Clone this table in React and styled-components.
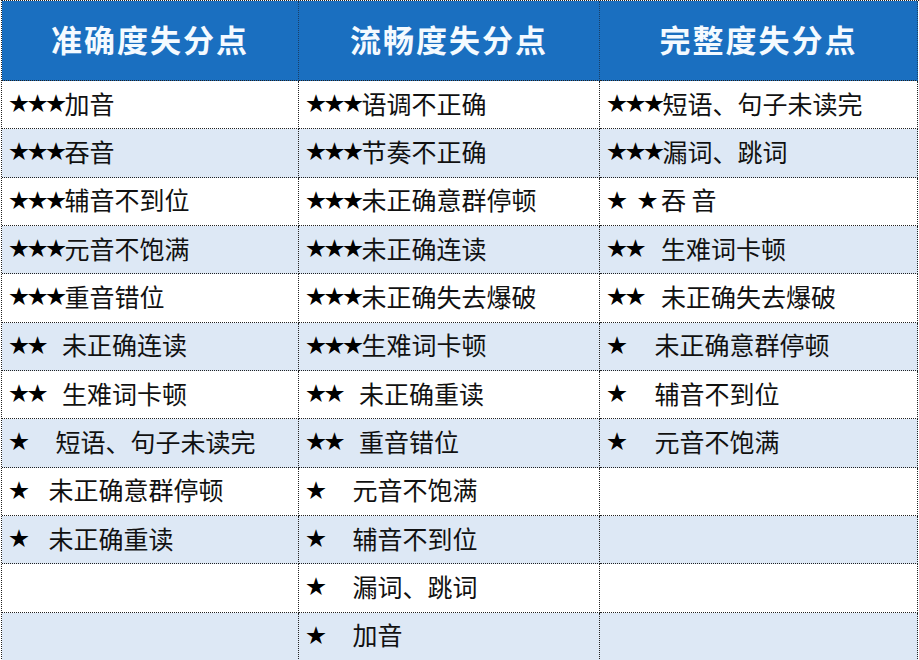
import React from "react";
import styled, { createGlobalStyle } from "styled-components";

const GlobalStyle = createGlobalStyle`
  html, body {
    margin: 0;
    padding: 0;
    background: #ffffff;
  }
  body {
    font-family: "Noto Sans CJK SC", "Noto Sans", sans-serif;
  }
`;

const Page = styled.div`
  width: 919px;
  height: 660px;
  padding-left: 1px;
  box-sizing: border-box;
  overflow: hidden;
`;

const Grid = styled.div`
  display: grid;
  grid-template-columns: 297px 301px 318px;
  grid-template-rows: 80px repeat(12, 1fr);
  height: 661px;
  border-top: 1px dotted #222;
  border-left: 1px dotted #222;
  box-sizing: border-box;
`;

const HeadCell = styled.div`
  background: #1a6fc0;
  color: #f4faff;
  font-weight: 700;
  font-size: 31px;
  letter-spacing: 2px;
  display: flex;
  align-items: center;
  justify-content: center;
  border-right: 1px dotted #1a3f66;
  border-bottom: 1px dotted #222;
  padding-bottom: 5px;
`;

const Cell = styled.div`
  background: ${(p) => (p.$shade ? "#dde8f5" : "#ffffff")};
  border-right: 1px dotted #222;
  border-bottom: 1px dotted #222;
  display: flex;
  align-items: center;
  padding-left: 7px;
  padding-bottom: 4px;
  color: #111;
  font-size: 25px;
  white-space: pre;
  overflow: hidden;
`;

const Stars = styled.span`
  font-family: "Noto Sans CJK SC", sans-serif;
  font-size: 20px;
  letter-spacing: -1.5px;
  word-spacing: 9px;
  margin-right: ${(p) => p.$gap}px;
  color: #000;
`;

const Label = styled.span``;

const columns = [
  {
    title: "准确度失分点",
    rows: [
      ["★★★", 0, "加音"],
      ["★★★", 0, "吞音"],
      ["★★★", 0, "辅音不到位"],
      ["★★★", 0, "元音不饱满"],
      ["★★★", 0, "重音错位"],
      ["★★", 16, "未正确连读"],
      ["★★", 16, "生难词卡顿"],
      ["★", 28, "短语、句子未读完"],
      ["★", 21, "未正确意群停顿"],
      ["★", 21, "未正确重读"],
      null,
      null,
    ],
  },
  {
    title: "流畅度失分点",
    rows: [
      ["★★★", 0, "语调不正确"],
      ["★★★", 0, "节奏不正确"],
      ["★★★", 0, "未正确意群停顿"],
      ["★★★", 0, "未正确连读"],
      ["★★★", 0, "未正确失去爆破"],
      ["★★★", 0, "生难词卡顿"],
      ["★★", 16, "未正确重读"],
      ["★★", 16, "重音错位"],
      ["★", 28, "元音不饱满"],
      ["★", 28, "辅音不到位"],
      ["★", 28, "漏词、跳词"],
      ["★", 28, "加音"],
    ],
  },
  {
    title: "完整度失分点",
    rows: [
      ["★★★", 0, "短语、句子未读完"],
      ["★★★", 0, "漏词、跳词"],
      ["★ ★", 5, "吞 音"],
      ["★★", 17, "生难词卡顿"],
      ["★★", 17, "未正确失去爆破"],
      ["★", 29, "未正确意群停顿"],
      ["★", 29, "辅音不到位"],
      ["★", 29, "元音不饱满"],
      null,
      null,
      null,
      null,
    ],
  },
];

export default function App() {
  const cells = [];
  columns.forEach((c, ci) => {
    cells.push(
      <HeadCell key={`h${ci}`} style={{ gridColumn: ci + 1, gridRow: 1 }}>
        {c.title}
      </HeadCell>
    );
    c.rows.forEach((r, ri) => {
      cells.push(
        <Cell
          key={`${ci}-${ri}`}
          $shade={ri % 2 === 1}
          style={{ gridColumn: ci + 1, gridRow: ri + 2 }}
        >
          {r && (
            <>
              <Stars $gap={r[1]}>{r[0]}</Stars>
              <Label>{r[2]}</Label>
            </>
          )}
        </Cell>
      );
    });
  });

  return (
    <>
      <GlobalStyle />
      <Page>
        <Grid>{cells}</Grid>
      </Page>
    </>
  );
}
